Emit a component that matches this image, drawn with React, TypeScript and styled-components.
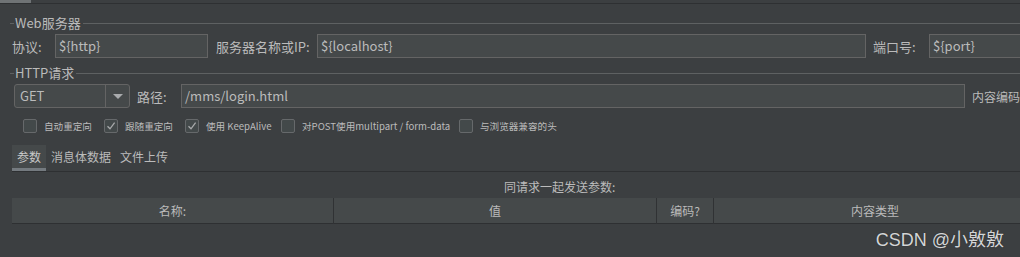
import styled, { createGlobalStyle } from "styled-components";

const GlobalStyle = createGlobalStyle`
  html, body {
    margin: 0;
    padding: 0;
    background: #3c3f41;
  }
  body {
    width: 1020px;
    height: 257px;
    overflow: hidden;
    font-family: "Noto Sans CJK SC", "Noto Sans", sans-serif;
    color: #bbbbbb;
  }
`;

const Page = styled.div`
  position: relative;
  width: 1020px;
  height: 257px;
  overflow: hidden;
  background: #3c3f41;
`;

const TopStrip = styled.div`
  height: 3px;
  border-bottom: 1px solid #2e3032;
  display: flex;
`;

const TopTab = styled.div`
  width: 31px;
  height: 3px;
  background: #6f7375;
`;

const SectionTitle = styled.div<{ $top: number }>`
  display: flex;
  align-items: center;
  height: 16px;
  margin-top: ${({ $top }) => $top}px;
  padding-left: 10px;
  font-size: 13px;
  line-height: 16px;
  color: #bbbbbb;
  white-space: nowrap;

  &::before {
    content: "";
    width: 4px;
    height: 1px;
    background: #5e6162;
  }
  &::after {
    content: "";
    flex: 1;
    height: 1px;
    background: #5e6162;
  }
  span {
    padding: 0 2px 0 1px;
  }
`;

const Row = styled.div<{ $top: number; $left: number }>`
  display: flex;
  align-items: center;
  height: 24px;
  margin-top: ${({ $top }) => $top}px;
  padding-left: ${({ $left }) => $left}px;
  white-space: nowrap;
`;

const Label = styled.span<{ $w?: number; $gap?: number; $size?: number }>`
  flex: none;
  width: ${({ $w }) => ($w ? `${$w}px` : "auto")};
  margin-left: ${({ $gap }) => $gap ?? 0}px;
  font-size: ${({ $size }) => $size ?? 13}px;
  color: #bbbbbb;
`;

const Field = styled.div<{ $w?: number }>`
  flex: ${({ $w }) => ($w ? "none" : "1 0 120px")};
  width: ${({ $w }) => ($w ? `${$w}px` : "auto")};
  height: 24px;
  box-sizing: border-box;
  border: 1px solid #646464;
  background: #45494a;
  padding-left: 3px;
  font-size: 13px;
  line-height: 21px;
  color: #bbbbbb;
  overflow: hidden;
`;

const Combo = styled.div`
  flex: none;
  display: flex;
  width: 116px;
  height: 24px;
  box-sizing: border-box;
  border: 1px solid #646464;
  border-radius: 3px;
  background: #45494a;
`;

const ComboText = styled.div`
  width: 91px;
  padding-left: 5px;
  box-sizing: border-box;
  border-right: 1px solid #646464;
  font-size: 13px;
  line-height: 21px;
`;

const ComboArrow = styled.div`
  flex: 1;
  display: flex;
  align-items: center;
  justify-content: center;

  &::after {
    content: "";
    border-left: 5px solid transparent;
    border-right: 5px solid transparent;
    border-top: 5px solid #a9abad;
    margin-top: 1px;
  }
`;

const CheckRow = styled.div`
  display: flex;
  align-items: center;
  height: 14px;
  margin-top: 11px;
  padding-left: 23px;
  white-space: nowrap;
`;

const CheckItem = styled.label<{ $w: number }>`
  flex: none;
  display: flex;
  align-items: center;
  width: ${({ $w }) => $w}px;
  font-size: 9.6px;
  color: #bbbbbb;
  overflow: hidden;
`;

const Box = styled.span<{ $on?: boolean }>`
  flex: none;
  width: 14px;
  height: 14px;
  box-sizing: border-box;
  border: 1px solid #66696b;
  border-radius: 2px;
  background: #43494a;
  margin-right: 7px;
  display: flex;
  align-items: center;
  justify-content: center;

  svg {
    display: ${({ $on }) => ($on ? "block" : "none")};
  }
`;

const Tabs = styled.div`
  display: flex;
  margin: 12px 0 0 12px;
  height: 26px;
  border-bottom: 1px solid #2e3032;
`;

const Tab = styled.div<{ $active?: boolean }>`
  padding: 0 5px;
  box-sizing: border-box;
  height: 26px;
  line-height: 23px;
  font-size: 12px;
  color: ${({ $active }) => ($active ? "#c8c8c8" : "#bbbbbb")};
  background: ${({ $active }) => ($active ? "#45494a" : "transparent")};
  border-bottom: 3px solid
    ${({ $active }) => ($active ? "#747a7f" : "transparent")};
  margin-right: ${({ $active }) => ($active ? 0 : -1)}px;
`;

const Caption = styled.div`
  height: 26px;
  padding-left: 504px;
  font-size: 12px;
  line-height: 30px;
  color: #bbbbbb;
  white-space: nowrap;
`;

const HeaderRow = styled.div`
  display: grid;
  grid-template-columns: 322px 323px 57px 322px;
  margin-left: 12px;
  height: 25px;
  border-bottom: 1px solid #2e3032;
  background: #45494a;
`;

const HeaderCell = styled.div<{ $last?: boolean }>`
  text-align: center;
  font-size: 12px;
  line-height: 26px;
  color: #bbbbbb;
  border-right: ${({ $last }) => ($last ? "none" : "1px solid #303234")};
  white-space: nowrap;
`;

const Watermark = styled.div`
  position: absolute;
  right: 16px;
  top: 225px;
  font-family: "Liberation Sans", "Noto Sans CJK SC", sans-serif;
  font-size: 18px;
  color: #d3d5d6;
  text-shadow: 0 0 1px #222;
  white-space: nowrap;
`;

const Tick = () => (
  <svg width="10" height="10" viewBox="0 0 10 10">
    <path d="M1.5 5.2 L4 7.8 L8.6 1.6" fill="none" stroke="#a8aaab" strokeWidth="1.3" />
  </svg>
);

const checks = [
  { label: "自动重定向", on: false, w: 81 },
  { label: "跟随重定向", on: true, w: 81 },
  { label: "使用 KeepAlive", on: true, w: 96 },
  { label: "对POST使用multipart / form-data", on: false, w: 178 },
  { label: "与浏览器兼容的头", on: false, w: 120 },
];

const App = () => {
  return (
    <Page>
      <GlobalStyle />
      <TopStrip>
        <TopTab />
      </TopStrip>
      <SectionTitle $top={11}>
        <span>Web服务器</span>
      </SectionTitle>
      <Row $top={3} $left={12}>
        <Label $w={43}>协议:</Label>
        <Field $w={153}>{"${http}"}</Field>
        <Label $w={101} $gap={8}>服务器名称或IP:</Label>
        <Field $w={549}>{"${localhost}"}</Field>
        <Label $w={56} $gap={7}>端口号:</Label>
        <Field>{"${port}"}</Field>
      </Row>
      <SectionTitle $top={7}>
        <span>HTTP请求</span>
      </SectionTitle>
      <Row $top={3} $left={14}>
        <Combo>
          <ComboText>GET</ComboText>
          <ComboArrow />
        </Combo>
        <Label $w={44} $gap={7}>路径:</Label>
        <Field $w={784}>/mms/login.html</Field>
        <Label $gap={7} $size={12}>内容编码</Label>
      </Row>
      <CheckRow>
        {checks.map((c) => (
          <CheckItem key={c.label} $w={c.w}>
            <Box $on={c.on}>
              <Tick />
            </Box>
            {c.label}
          </CheckItem>
        ))}
      </CheckRow>
      <Tabs>
        <Tab $active>参数</Tab>
        <Tab>消息体数据</Tab>
        <Tab>文件上传</Tab>
      </Tabs>
      <Caption>同请求一起发送参数:</Caption>
      <HeaderRow>
        <HeaderCell>名称:</HeaderCell>
        <HeaderCell>值</HeaderCell>
        <HeaderCell>编码?</HeaderCell>
        <HeaderCell $last>内容类型</HeaderCell>
      </HeaderRow>
      <Watermark>CSDN @小敫敫</Watermark>
    </Page>
  );
};

export default App;
